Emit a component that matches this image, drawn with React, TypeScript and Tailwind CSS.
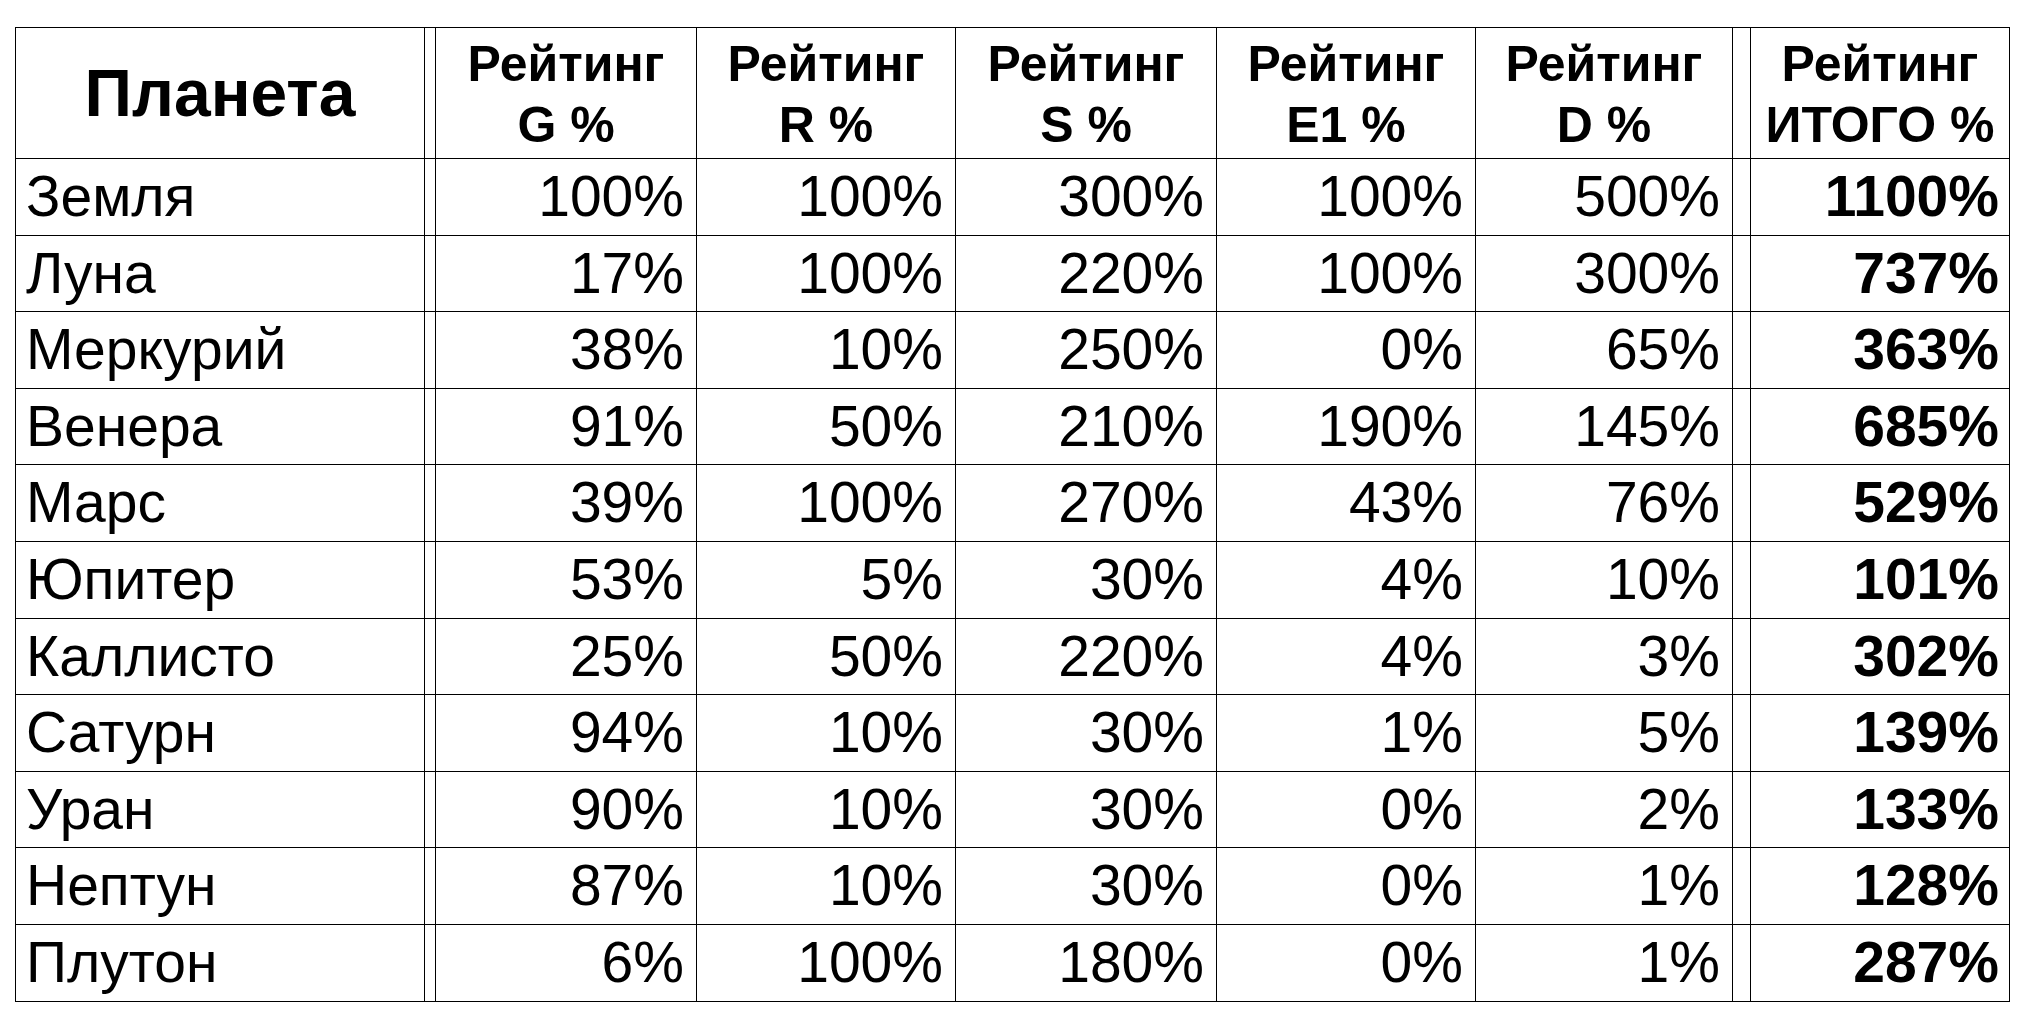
import React from 'react';

const rows: [string, string[], string][] = [
    ['Земля', ['100%', '100%', '300%', '100%', '500%'], '1100%'],
    ['Луна', ['17%', '100%', '220%', '100%', '300%'], '737%'],
    ['Меркурий', ['38%', '10%', '250%', '0%', '65%'], '363%'],
    ['Венера', ['91%', '50%', '210%', '190%', '145%'], '685%'],
    ['Марс', ['39%', '100%', '270%', '43%', '76%'], '529%'],
    ['Юпитер', ['53%', '5%', '30%', '4%', '10%'], '101%'],
    ['Каллисто', ['25%', '50%', '220%', '4%', '3%'], '302%'],
    ['Сатурн', ['94%', '10%', '30%', '1%', '5%'], '139%'],
    ['Уран', ['90%', '10%', '30%', '0%', '2%'], '133%'],
    ['Нептун', ['87%', '10%', '30%', '0%', '1%'], '128%'],
    ['Плутон', ['6%', '100%', '180%', '0%', '1%'], '287%'],
];

const headers = ['G %', 'R %', 'S %', 'E1 %', 'D %'];

const cell = 'border-r border-b border-black';
const headCell = `${cell} flex flex-col items-center justify-center pt-1 text-[50px] leading-[61px] font-bold`;

export default function App() {
    return (
        <div className="min-h-screen bg-white pt-[27px] pl-[15px] text-black font-['Liberation_Sans',Arial,sans-serif]">
            <div className="grid w-max grid-cols-[409px_11px_261px_259px_261px_259px_257px_18px_259px] grid-rows-[131px_repeat(11,76.6px)] border-t border-l border-black">
                {/* Header */}
                <div className={`${cell} flex items-center justify-center text-[66px] font-bold`}>Планета</div>
                <div className={cell} />
                {headers.map((h) => (
                    <div key={h} className={headCell}>
                        <span>Рейтинг</span>
                        <span>{h}</span>
                    </div>
                ))}
                <div className={cell} />
                <div className={headCell}>
                    <span>Рейтинг</span>
                    <span>ИТОГО %</span>
                </div>

                {/* Body */}
                {rows.map(([name, values, total]) => (
                    <React.Fragment key={name}>
                        <div className={`${cell} flex items-center pl-[10px] text-[57px]`}>{name}</div>
                        <div className={cell} />
                        {values.map((v, i) => (
                            <div key={i} className={`${cell} flex items-center justify-end pr-3 text-[57px]`}>
                                {v}
                            </div>
                        ))}
                        <div className={cell} />
                        <div className={`${cell} flex items-center justify-end pr-[10px] text-[57px] font-bold`}>{total}</div>
                    </React.Fragment>
                ))}
            </div>
        </div>
    );
}
